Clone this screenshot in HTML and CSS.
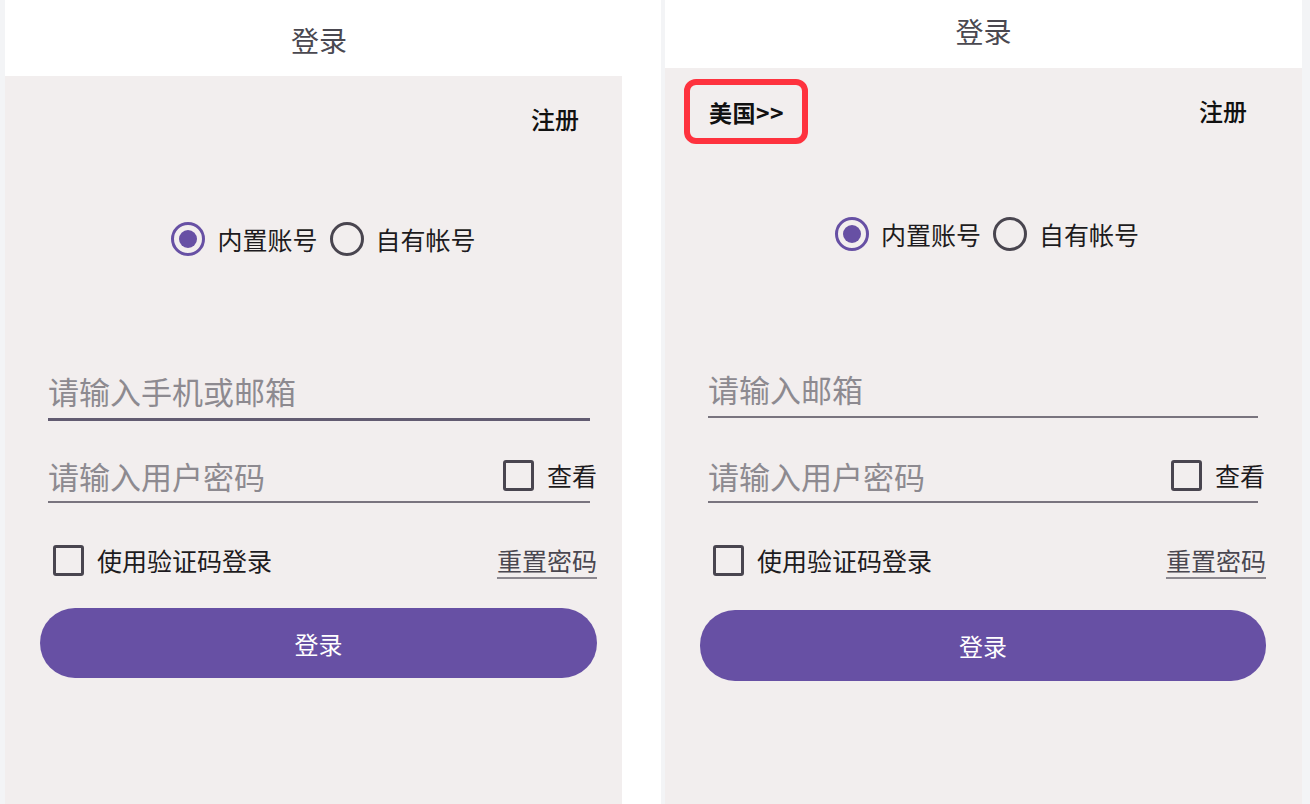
FILE: index.html
```html
<!DOCTYPE html>
<html lang="zh-CN">

<head>
    <meta charset="UTF-8">
    <meta name="viewport" content="width=device-width, initial-scale=1.0">
    <title>登录</title>
    <link rel="stylesheet" href="styles.css">
</head>

<body>
    <div class="screens">
        <!-- 左：手机或邮箱登录 -->
        <div class="phone phone-a">
            <div class="app-bar">登录</div>
            <div class="login-body">
                <div class="top-row">
                    <a class="register" href="javascript:;">注册</a>
                </div>
                <div class="account-type">
                    <label class="radio"><input type="radio" name="type-a" checked><span>内置账号</span></label>
                    <label class="radio"><input type="radio" name="type-a"><span>自有帐号</span></label>
                </div>
                <div class="field field-user field-focus">
                    <input type="text" placeholder="请输入手机或邮箱">
                </div>
                <div class="field field-pwd">
                    <input type="password" placeholder="请输入用户密码">
                    <label class="check check-show"><input type="checkbox"><span>查看</span></label>
                </div>
                <div class="options">
                    <label class="check"><input type="checkbox"><span>使用验证码登录</span></label>
                    <a class="reset" href="javascript:;">重置密码</a>
                </div>
                <button class="login-btn">登录</button>
            </div>
        </div>

        <!-- 右：带地区选择 -->
        <div class="phone phone-b">
            <div class="app-bar">登录</div>
            <div class="login-body">
                <div class="top-row">
                    <a class="region" href="javascript:;">美国&gt;&gt;</a>
                    <a class="register" href="javascript:;">注册</a>
                </div>
                <div class="account-type">
                    <label class="radio"><input type="radio" name="type-b" checked><span>内置账号</span></label>
                    <label class="radio"><input type="radio" name="type-b"><span>自有帐号</span></label>
                </div>
                <div class="field field-user">
                    <input type="text" placeholder="请输入邮箱">
                </div>
                <div class="field field-pwd">
                    <input type="password" placeholder="请输入用户密码">
                    <label class="check check-show"><input type="checkbox"><span>查看</span></label>
                </div>
                <div class="options">
                    <label class="check"><input type="checkbox"><span>使用验证码登录</span></label>
                    <a class="reset" href="javascript:;">重置密码</a>
                </div>
                <button class="login-btn">登录</button>
            </div>
        </div>
    </div>
</body>

</html>
```

FILE: styles.css
```css
* {
    padding: 0;
    margin: 0;
    box-sizing: border-box;
}

body {
    background-color: #fff;
    font-family: "Noto Sans CJK SC", "Noto Sans", sans-serif;
    color: #1d1b20;
}

a {
    text-decoration: none;
    color: #1d1b20;
}

.screens {
    display: flex;
    height: 804px;
}

.phone {
    display: flex;
    flex-direction: column;
    flex-shrink: 0;
    height: 100%;
    border-left: 5px solid #f3f4f6;
    background-color: #f2eeee;
}

.phone-a {
    width: 622px;
}

.phone-b {
    width: 649px;
    margin-left: 39px;
    border-left-width: 4px;
    border-right: 8px solid #f3f4f6;
}

.app-bar {
    height: 76px;
    padding: 4px 0 0 11px;
    background-color: #fff;
    font-size: 28px;
    line-height: 72px;
    text-align: center;
    color: #4a4850;
}

.phone-b .app-bar {
    height: 68px;
    padding: 0;
    line-height: 63px;
}

.login-body {
    display: flex;
    flex-direction: column;
    flex: 1;
    padding: 0 25px 0 35px;
}

.phone-b .login-body {
    padding: 0 36px 0 35px;
}

/* 顶部：地区 / 注册 */
.top-row {
    display: flex;
    justify-content: flex-end;
    align-items: center;
    height: 38px;
    margin-top: 24px;
    padding-right: 18px;
}

.phone-b .top-row {
    justify-content: space-between;
    height: 64px;
    margin-top: 11px;
    margin-left: -16px;
    padding-right: 19px;
}

.register,
.region {
    font-size: 24px;
    font-weight: 500;
    line-height: 32px;
    color: #111;
}

.region {
    display: block;
    width: 124px;
    height: 65px;
    padding-top: 11px;
    padding-left: 19px;
    border: 6px solid #fe323e;
    border-radius: 12px;
    font-size: 23px;
    font-weight: 600;
    letter-spacing: 0.5px;
}

/* 账号类型 */
.account-type {
    display: flex;
    justify-content: center;
    align-items: center;
    height: 40px;
    margin-top: 81px;
    padding-left: 10px;
}

.phone-b .account-type {
    margin-top: 71px;
    padding-left: 8px;
}

.radio {
    display: flex;
    align-items: center;
    font-size: 25px;
    line-height: 32px;
    cursor: pointer;
}

.radio+.radio {
    margin-left: 12px;
}

.radio input {
    appearance: none;
    position: relative;
    width: 34px;
    height: 34px;
    margin-right: 12px;
    border: 3px solid #49454f;
    border-radius: 50%;
}

.radio input:checked {
    border-color: #6750a4;
}

.radio input:checked::after {
    content: "";
    position: absolute;
    left: 5px;
    top: 5px;
    width: 18px;
    height: 18px;
    border-radius: 50%;
    background-color: #6750a4;
}

/* 输入框 */
.field {
    display: flex;
    align-items: center;
    margin: 0 7px 0 8px;
    border-bottom: 2px solid #79747e;
}

.phone-b .field {
    margin-right: 8px;
}

.field input {
    flex: 1;
    min-width: 0;
    height: 100%;
    border: 0;
    outline: none;
    background: transparent;
    font-family: inherit;
    font-size: 31px;
    color: #1d1b20;
}

.field input::placeholder {
    color: #8d8a90;
}

.field-user {
    height: 51px;
    margin-top: 113px;
    padding-bottom: 6px;
}

.phone-a .field-user {
    margin-top: 110px;
}

.field-focus {
    height: 52px;
    padding-bottom: 6px;
    border-bottom: 3px solid #625b71;
}

.field-pwd {
    height: 51px;
    margin-top: 34px;
    padding-bottom: 3px;
}

.phone-a .field-pwd {
    margin-top: 31px;
}

/* 复选框 */
.check {
    display: flex;
    align-items: center;
    font-size: 25px;
    line-height: 32px;
    cursor: pointer;
}

.check input {
    appearance: none;
    width: 31px;
    height: 31px;
    margin-right: 13px;
    border: 3px solid #49454f;
    border-radius: 3px;
}

.check-show {
    margin-right: -7px;
}

.options {
    display: flex;
    justify-content: space-between;
    align-items: center;
    height: 36px;
    margin-top: 39px;
    padding-left: 13px;
}

.reset {
    font-size: 25px;
    line-height: 32px;
    color: #4a4750;
    text-decoration: underline;
    text-decoration-color: #8c888f;
    text-decoration-thickness: 2px;
    text-underline-offset: 6px;
}

.login-btn {
    height: 70px;
    margin-top: 30px;
    border: 0;
    border-radius: 35px;
    background-color: #6750a4;
    font-family: inherit;
    font-size: 24px;
    color: #fff;
    cursor: pointer;
}

.phone-b .login-btn {
    height: 71px;
    margin-top: 32px;
}
```
